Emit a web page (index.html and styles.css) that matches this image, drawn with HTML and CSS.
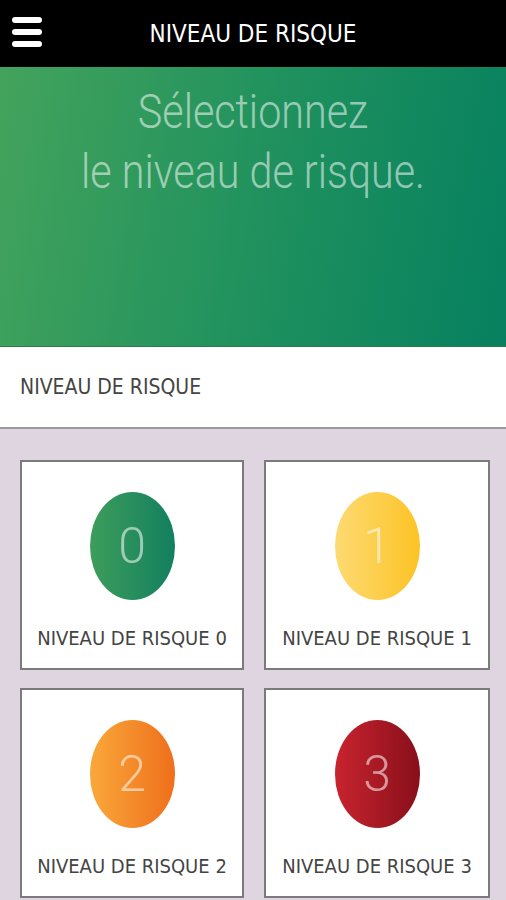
FILE: index.html
```html
<!DOCTYPE html>
<html lang="fr">
<head>
    <meta charset="UTF-8">
    <meta name="viewport" content="width=device-width, initial-scale=1.0">
    <title>Niveau de risque</title>
    <link rel="stylesheet" href="styles.css">
</head>
<body>
    <header class="topbar">
        <div class="menu-btn">
            <span></span>
            <span></span>
            <span></span>
        </div>
        <h1>NIVEAU DE RISQUE</h1>
    </header>

    <section class="hero">
        <p>Sélectionnez<br>le niveau de risque.</p>
    </section>

    <div class="section-title">NIVEAU DE RISQUE</div>

    <main class="grid">
        <div class="card">
            <div class="dot dot-0">0</div>
            <div class="label">NIVEAU DE RISQUE 0</div>
        </div>
        <div class="card">
            <div class="dot dot-1">1</div>
            <div class="label">NIVEAU DE RISQUE 1</div>
        </div>
        <div class="card">
            <div class="dot dot-2">2</div>
            <div class="label">NIVEAU DE RISQUE 2</div>
        </div>
        <div class="card">
            <div class="dot dot-3">3</div>
            <div class="label">NIVEAU DE RISQUE 3</div>
        </div>
    </main>
</body>
</html>
```

FILE: styles.css
```css
body {
    margin: 0;
    font-family: "Liberation Sans Narrow", "DejaVu Sans Condensed", "Liberation Sans", sans-serif;
    background-color: #dfd5e1;
}
.topbar {
    height: 67px;
    background: #000;
    display: flex;
    align-items: center;
    justify-content: center;
    position: relative;
}
.menu-btn {
    position: absolute;
    left: 12px;
    top: 17px;
    display: flex;
    flex-direction: column;
    gap: 6px;
}
.menu-btn span {
    display: block;
    width: 30px;
    height: 6px;
    border-radius: 3px;
    background: #fff;
}
.topbar h1 {
    margin: 0;
    color: #fff;
    font-size: 24px;
    font-weight: normal;
}
.hero {
    height: 279px;
    background: linear-gradient(100deg, #43a35c 0%, #21925e 50%, #06805f 100%);
    border-bottom: 1px solid #2f7a4a;
    overflow: hidden;
}
.hero p {
    margin: 0;
    padding-top: 15px;
    text-align: center;
    font-family: Roboto, "Liberation Sans", sans-serif;
    font-weight: 300;
    font-size: 48px;
    line-height: 60px;
    color: rgba(255, 255, 255, 0.55);
    transform: scaleX(0.86);
}
.section-title {
    height: 80px;
    background: #fff;
    border-bottom: 2px solid #9a9a9a;
    display: flex;
    align-items: center;
    padding-left: 20px;
    font-size: 21px;
    color: #444;
}
.grid {
    display: grid;
    grid-template-columns: 224px 226px;
    gap: 18px 20px;
    padding: 31px 16px 0 20px;
}
.card {
    box-sizing: border-box;
    height: 210px;
    padding-top: 30px;
    background: #fff;
    border: 2px solid #7b7b7b;
    display: flex;
    flex-direction: column;
    align-items: center;
}
.dot {
    width: 85px;
    height: 108px;
    border-radius: 50%;
    display: flex;
    align-items: center;
    justify-content: center;
    font-family: Roboto, "Liberation Sans", sans-serif;
    font-weight: 300;
    font-size: 50px;
    color: rgba(255, 255, 255, 0.55);
}
.dot-0 { background: linear-gradient(90deg, #3d9d5b, #127f5f); }
.dot-1 { background: linear-gradient(90deg, #fdda72, #fcc325); }
.dot-2 { background: linear-gradient(90deg, #f9a83a, #ef6f1c); }
.dot-3 { background: linear-gradient(90deg, #c8242f, #880f1a); }
.label {
    margin-top: 26px;
    font-size: 20px;
    color: #444;
}
```
